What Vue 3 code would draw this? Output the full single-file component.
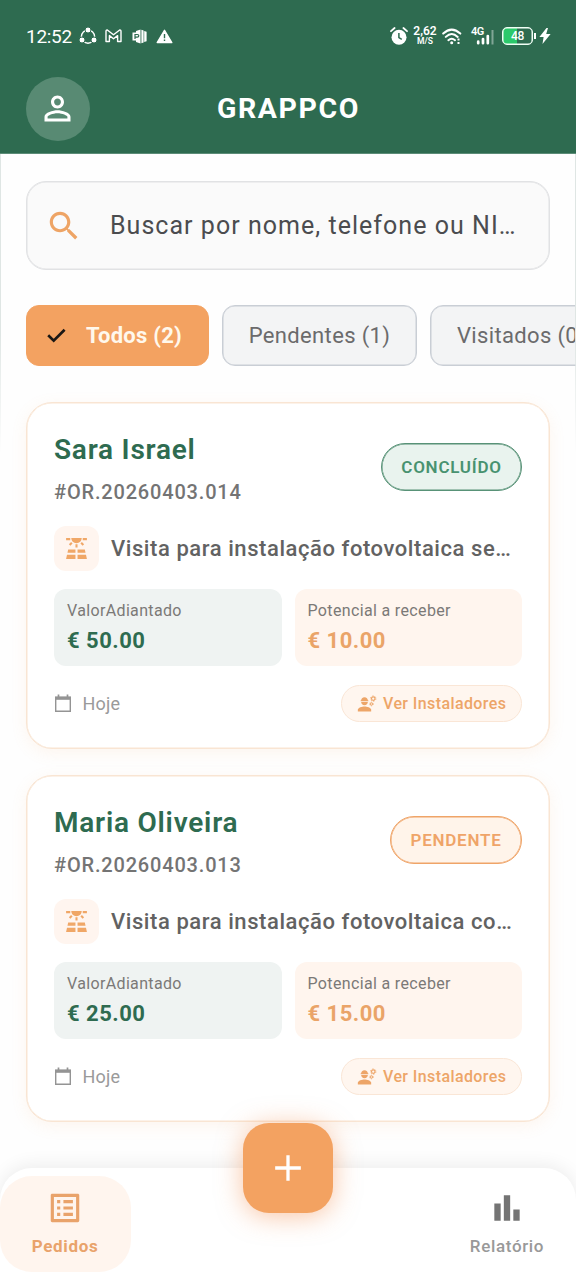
<script setup>
const filters = [
  { label: 'Todos (2)', active: true, cls: 'c1' },
  { label: 'Pendentes (1)', active: false, cls: 'c2' },
  { label: 'Visitados (0)', active: false, cls: 'c3' }
]
const orders = [
  { name: 'Sara Israel', code: '#OR.20260403.014', status: 'CONCLUÍDO', done: true, text: 'Visita para instalação fotovoltaica se…', paid: '€ 50.00', due: '€ 10.00' },
  { name: 'Maria Oliveira', code: '#OR.20260403.013', status: 'PENDENTE', done: false, text: 'Visita para instalação fotovoltaica co…', paid: '€ 25.00', due: '€ 15.00' }
]
</script>

<template>
  <div class="screen">
    <header class="header">
      <div class="status">
        <span class="clock">12:52</span>
        <svg class="s-share" width="18" height="18" viewBox="0 0 18 18"><circle cx="9" cy="9.6" r="6.6" fill="none" stroke="#fff" stroke-width="1.4" /><g fill="#fff" stroke="#2e6b50" stroke-width="1"><circle cx="9" cy="3" r="3" /><circle cx="3" cy="13" r="3" /><circle cx="15" cy="13" r="3" /></g></svg>
        <svg class="s-mail" width="17" height="14" viewBox="0 0 17 14"><path d="M1 12.5V2.2Q1 .8 2.3 1L8.5 5.8 14.7 1Q16 .8 16 2.2V12.5H12.6V6.6L8.5 9.8 4.4 6.6V12.5Z" fill="none" stroke="#fff" stroke-width="1.4" stroke-linejoin="round" /></svg>
        <svg class="s-doc" width="15" height="15" viewBox="0 0 15 15"><path d="M4 2L8.500 .5V14.500L4 13V11.500H.5V3.500H4Z" fill="#fff" /><path d="M9.400 .7L11.600 1.500V13.500L9.400 14.300ZM12.200 2L14.600 2.800V12.200L12.200 13Z" fill="#fff" /><path d="M3 10V5.500H5.300Q6.800 5.500 6.800 6.800T5.300 8.100H3" fill="none" stroke="#2e6b50" stroke-width="1.200" /></svg>
        <svg class="s-warn" width="17" height="15" viewBox="0 0 17 15"><path d="M8.500 1.300L15.800 13.600H1.200Z" fill="#fff" stroke="#fff" stroke-width="1.400" stroke-linejoin="round" /><path d="M8.500 5V9.300M8.500 10.600V12" stroke="#2e6b50" stroke-width="1.400" /></svg>
        <span class="grow"></span>
        <svg class="s-alarm" width="18" height="18" viewBox="0 0 18 18"><circle cx="9" cy="10.200" r="7.500" fill="#fff" /><path d="M1 4.200L4.600 1M17 4.200L13.400 1" stroke="#fff" stroke-width="1.800" stroke-linecap="round" /><path d="M8.900 6V10.600L11.800 12.300" fill="none" stroke="#2e6b50" stroke-width="1.500" /></svg>
        <div class="speed"><b>2,62</b><i>M/S</i></div>
        <svg class="s-wifi" width="20" height="17" viewBox="0 0 20 17"><path d="M1.200 5.600Q9.700-2.400 18.300 5.600M3.800 8.900Q9.700 3.200 15.700 8.900M6.400 12.200Q9.700 9.200 13 12.200" fill="none" stroke="#fff" stroke-width="2" stroke-linecap="round" /><circle cx="9.700" cy="14.800" r="1.500" fill="#fff" /><path d="M16.500 10.500V12.500M16.500 14V16" stroke="#fff" stroke-width="2" /></svg>
        <div class="cell"><span>4G</span>
          <svg width="18" height="16" viewBox="0 0 18 16"><path d="M2.200 14.200V12.700M7 14.200V10M11.800 14.200V7" stroke="#fff" stroke-width="2.700" stroke-linecap="round" /><path d="M16.500 15.500V1" stroke="#fff" stroke-opacity=".4" stroke-width="2" /></svg>
        </div>
        <div class="battery"><span>48</span></div>
        <svg class="s-bolt" width="12" height="16" viewBox="0 0 12 16"><path d="M7.500 0L.4 9H4.600L3.500 16 11.600 6H7.200L9 0Z" fill="#fff" /></svg>
      </div>
      <div class="bar">
        <div class="avatar"><svg width="39" height="39" viewBox="0 0 24 24" fill="#fff"><path d="M12 5.900c1.160 0 2.100.94 2.100 2.100s-.94 2.100-2.100 2.100S9.900 9.160 9.900 8s.94-2.100 2.100-2.100m0 9c2.970 0 6.100 1.460 6.100 2.100v1.100H5.900V17c0-.64 3.130-2.100 6.100-2.100M12 4C9.790 4 8 5.790 8 8s1.790 4 4 4 4-1.790 4-4-1.790-4-4-4zm0 9c-2.670 0-8 1.340-8 4v3h16v-3c0-2.660-5.330-4-8-4z" /></svg></div>
        <h1>GRAPPCO</h1>
      </div>
    </header>

    <main class="main">
      <div class="search">
        <svg width="38" height="38" viewBox="0 0 24 24" fill="#eea465"><path d="M15.500 14h-.79l-.28-.27C15.410 12.590 16 11.110 16 9.500 16 5.910 13.090 3 9.500 3S3 5.910 3 9.500 5.910 16 9.500 16c1.610 0 3.090-.59 4.230-1.570l.27.28v.79l5 4.990L20.490 19l-4.990-5zm-6 0C7.010 14 5 11.990 5 9.500S7.010 5 9.500 5 14 7.010 14 9.500 11.990 14 9.500 14z" /></svg>
        <span>Buscar por nome, telefone ou NI…</span>
      </div>

      <div class="chips">
        <div v-for="f in filters" :key="f.label" class="chip" :class="[f.cls, { active: f.active }]">
          <svg v-if="f.active" width="19" height="15" viewBox="0 0 19 15"><path d="M1.200 7.300L6.700 12.700 17.600 1.700" fill="none" stroke="#1a1714" stroke-width="2.700" /></svg>
          <span>{{ f.label }}</span>
        </div>
      </div>

      <article v-for="o in orders" :key="o.code" class="card">
        <div class="top">
          <div>
            <h2>{{ o.name }}</h2>
            <p class="code">{{ o.code }}</p>
          </div>
          <span class="pill" :class="{ done: o.done }">{{ o.status }}</span>
        </div>
        <div class="desc">
          <div class="solar"><svg width="25" height="25" viewBox="0 0 24 24" fill="#f0a767"><path d="M4 13h7v3H3.330zM13 13h7l.67 3H13zM13 18h8.110L22 22h-9zM2.890 18H11v4H2zM11 8h2v3h-2zM15.760 7.210l1.420-1.420 2.120 2.120-1.420 1.420zM4.700 7.910l2.120-2.120 1.420 1.420-2.120 2.120zM2 2h4v2H2zM18 2h4v2h-4zM12 7c2.760 0 5-2.240 5-5H7c0 2.760 2.240 5 5 5z" /></svg></div>
          <span>{{ o.text }}</span>
        </div>
        <div class="amounts">
          <div class="amount"><small>ValorAdiantado</small><strong>{{ o.paid }}</strong></div>
          <div class="amount due"><small>Potencial a receber</small><strong>{{ o.due }}</strong></div>
        </div>
        <div class="foot">
          <svg width="18" height="19" viewBox="0 0 18 19" fill="none" stroke="#949494"><path d="M1.700 3.200H16.300V17.300H1.700Z" stroke-width="1.400" /><path d="M1 4.300H17" stroke-width="3" /><path d="M4.500 .5V3M13.500 .5V3" stroke-width="1.700" /></svg>
          <span class="when">Hoje</span>
          <div class="installers">
            <svg width="20" height="20" viewBox="0 0 24 24" fill="#eda568"><path d="M9 15c-2.670 0-8 1.340-8 4v2h16v-2c0-2.660-5.330-4-8-4z" /><path d="M5 9.500h8c0 2.200-1.800 4-4 4s-4-1.800-4-4zM4.400 7.500H5c0-2 1.500-3.700 4-3.700s4 1.700 4 3.700h.6v1.300H4.400z" /><g fill="none" stroke="#eda568"><circle cx="19.500" cy="5.500" r="2.100" stroke-width="1.400" /><circle cx="19.500" cy="5.500" r="3.200" stroke-width="1" stroke-dasharray="1.680 1.680" /><circle cx="17.300" cy="12" r="1.400" stroke-width="1.200" /><circle cx="17.300" cy="12" r="2.300" stroke-width=".8" stroke-dasharray="1.200 1.200" /></g></svg>
            <span>Ver Instaladores</span>
          </div>
        </div>
      </article>
    </main>

    <nav class="nav">
      <div class="tab on">
        <svg width="38" height="38" viewBox="0 0 24 24" fill="#e9a36b"><path d="M19 5v14H5V5h14m1.100-2H3.900c-.5 0-.9.400-.9.900v16.200c0 .4.400.9.900.9h16.200c.4 0 .9-.5.900-.9V3.900c0-.5-.5-.9-.9-.9zM11 7h6v2h-6V7zm0 4h6v2h-6v-2zm0 4h6v2h-6zM7 7h2v2H7zm0 4h2v2H7zm0 4h2v2H7z" /></svg>
        <span>Pedidos</span>
      </div>
      <div class="tab">
        <svg width="38" height="38" viewBox="0 0 24 24" fill="#747474"><path d="M4 9.200h4V20H4zM16 13h4v7h-4zM10 4h4v16h-4z" /></svg>
        <span>Relatório</span>
      </div>
    </nav>
    <div class="fab"><svg width="44" height="44" viewBox="0 0 24 24" fill="#fff"><path d="M19 12.900h-6.100v6.100h-1.800v-6.100H5v-1.800h6.100V5h1.800v6.100H19z" /></svg></div>
  </div>
</template>

<style>
body { margin: 0; background: #fff; }
</style>

<style scoped>
* { box-sizing: border-box; }
h1, h2, p { margin: 0; }
svg { display: block; flex: none; }
.screen { position: relative; width: 576px; height: 1280px; overflow: hidden; background: #fefefe; font-family: Roboto, "Noto Sans", sans-serif; white-space: nowrap; }
.header { height: 154px; background: #2e6b50; border-bottom: 1px solid #5c8c77; color: #fff; }
.status { height: 72px; padding: 0 25px 0 26px; display: flex; align-items: center; }
.clock { font-size: 19px; line-height: 22px; letter-spacing: -.3px; width: 53px; margin-top: 1px; }
.s-mail { margin-left: 8px; }
.s-doc { margin-left: 10px; }
.s-warn { margin-left: 9px; }
.grow { flex: 1; }
.speed { margin-left: 5px; width: 24px; display: flex; flex-direction: column; align-items: center; margin-top: -2px; }
.speed b { font-size: 12px; line-height: 11px; font-weight: 600; }
.speed i { font-size: 8.500px; line-height: 8px; font-weight: 600; font-style: normal; }
.s-wifi { margin-left: 5px; }
.cell { position: relative; width: 23px; height: 18px; margin-left: 9px; display: flex; justify-content: flex-end; align-items: flex-end; }
.cell span { position: absolute; left: 0; top: 0; font-size: 11px; line-height: 10px; font-weight: 600; letter-spacing: -.5px; }
.battery { position: relative; margin-left: 8px; width: 31px; height: 18px; border: 1px solid #f1fff6; box-shadow: inset 0 0 0 .5px #f1fff6; border-radius: 5px; background: linear-gradient(90deg, #2bc96b 14px, #2e6b50 14px); display: flex; align-items: center; justify-content: center; font-size: 12px; line-height: 14px; font-weight: 500; letter-spacing: -.4px; }
.battery::after { content: ""; position: absolute; right: -4px; top: 5px; width: 2px; height: 6px; background: #fff; }
.s-bolt { margin-left: 6px; }
.bar { display: grid; grid-template-columns: 64px 1fr 64px; padding: 0 26px 0 25.500px; height: 73px; align-items: center; }
.avatar { width: 64px; height: 64px; border-radius: 50%; background: #588a73; display: flex; align-items: center; justify-content: center; }
h1 { text-align: center; font-size: 28.500px; line-height: 34px; font-weight: 700; letter-spacing: 1.600px; padding: 1px 0 0 1.500px; }
.main { padding: 27px 26px 0; display: flex; flex-direction: column; position: relative; }
.main::before { content: ""; position: absolute; inset: 0 0 auto; height: 300px; border: solid #dfe6e4; border-width: 0 1px; mask-image: linear-gradient(#000 60%, transparent); pointer-events: none; }
.search { height: 89px; border: 1px solid #e1e2e4; box-shadow: inset 0 0 0 .5px #e1e2e4; border-radius: 20px; background: #fafafa; display: flex; align-items: center; padding-left: 18px; font-size: 25px; line-height: 30px; color: #4b4c4f; letter-spacing: 1.030px; }
.search span { margin-left: 27px; }
.chips { display: flex; gap: 13px; margin: 35px -26px 36px 0; height: 61px; overflow: hidden; }
.chip { flex: none; height: 61px; border: 1px solid #c9ced5; box-shadow: inset 0 0 0 .5px #c9ced5; border-radius: 13px; background: #f3f4f5; color: #6b6b6c; font-size: 22px; line-height: 26px; display: flex; align-items: center; justify-content: center; letter-spacing: .35px; }
.c1 { width: 183px; justify-content: flex-start; padding-left: 20px; gap: 20px; letter-spacing: .25px; }
.c2 { width: 195px; }
.c3 { width: 186px; padding-right: 3px; }
.chip.active { background: #f3a261; border-color: #f3a261; box-shadow: none; color: #fff8ec; font-weight: 700; }
.card { height: 347px; margin-bottom: 26px; border: 1px solid #f9e5d3; border-radius: 26px; background: #fff; padding: 24px 27px; box-shadow: inset 0 0 0 .5px #f9e5d3, 0 4px 16px rgba(243, 162, 97, .1); }
.top { height: 83px; display: flex; justify-content: space-between; align-items: center; }
h2 { font-size: 28px; line-height: 34px; font-weight: 600; color: #2e6b50; letter-spacing: .770px; margin-top: -1px; }
.code { font-size: 20px; line-height: 24px; font-weight: 500; color: #747474; margin-top: 13px; letter-spacing: .820px; }
.pill { height: 48px; width: 132px; margin-top: -3px; border: 1px solid #efa468; box-shadow: inset 0 0 0 .5px #efa468; border-radius: 24px; background: #fff4ea; color: #efa468; display: flex; align-items: center; justify-content: center; font-size: 17px; font-weight: 600; letter-spacing: .750px; }
.pill.done { width: 141px; background: #e9f3ee; border-color: #589277; box-shadow: inset 0 0 0 .5px #589277; color: #489270; }
.desc { margin-top: 15px; height: 46px; display: flex; align-items: center; font-size: 22px; font-weight: 500; color: #626262; letter-spacing: .570px; }
.solar { width: 45px; height: 45px; border-radius: 12px; background: #fff5ef; display: flex; align-items: center; justify-content: center; margin-right: 12px; }
.amounts { margin-top: 18px; display: grid; grid-template-columns: 1fr 1fr; gap: 13px; height: 76px; }
.amount { border-radius: 12px; background: #eff3f2; padding: 12px 13px; color: #2e6b50; display: flex; flex-direction: column; }
.amount small { font-size: 16px; line-height: 20px; color: #7b7977; letter-spacing: .35px; }
.amount strong { font-size: 22px; line-height: 26px; margin-top: 7px; font-weight: 700; letter-spacing: .5px; }
.amount.due { background: #fff5ee; color: #eaa468; }
.foot { margin-top: 20px; height: 37px; display: flex; align-items: center; }
.when { margin-left: 10.500px; font-size: 18px; color: #9a9a9a; letter-spacing: .2px; }
.installers { margin-left: auto; width: 181px; height: 37px; border: 1px solid #fae6d6; border-radius: 19px; background: #fff6ef; color: #eda568; display: flex; align-items: center; padding-left: 15px; gap: 6px; font-size: 16px; font-weight: 500; letter-spacing: .4px; }
.nav { position: absolute; left: 0; right: 0; bottom: 0; height: 112px; border-radius: 32px 32px 0 0; background: #fff; box-shadow: 0 -3px 18px rgba(0, 0, 0, .07); display: flex; justify-content: space-between; padding: 8px 0; }
.tab { width: 138px; height: 96px; display: flex; flex-direction: column; align-items: center; padding-top: 13px; color: #999; font-size: 17px; line-height: 20px; font-weight: 500; letter-spacing: .650px; }
.tab span { margin-top: 9px; }
.tab.on { width: 131px; padding-right: 1px; background: #fff5ee; border-radius: 32px; color: #e9a36b; font-weight: 700; }
.fab { position: absolute; left: 243px; top: 1123px; width: 90px; height: 90px; border-radius: 26px; background: #f3a261; display: flex; align-items: center; justify-content: center; box-shadow: 0 3px 26px rgba(243, 140, 75, .5); }
</style>
